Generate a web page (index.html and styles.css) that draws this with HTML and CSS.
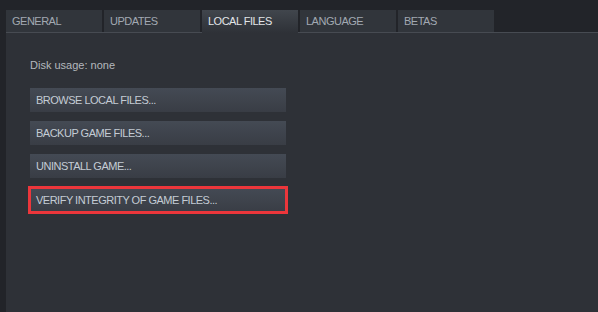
FILE: index.html
```html
<!DOCTYPE html>
<html lang="en">
<head>
    <meta charset="UTF-8">
    <title>Properties - Local Files</title>
    <link rel="stylesheet" href="styles.css">
</head>
<body>
    <div class="window">
        <nav class="tabs">
            <div class="tab">GENERAL</div>
            <div class="tab">UPDATES</div>
            <div class="tab active">LOCAL FILES</div>
            <div class="tab">LANGUAGE</div>
            <div class="tab">BETAS</div>
        </nav>
        <section class="panel">
            <p class="disk">Disk usage: none</p>
            <div class="actions">
                <button class="btn">BROWSE LOCAL FILES...</button>
                <button class="btn">BACKUP GAME FILES...</button>
                <button class="btn">UNINSTALL GAME...</button>
                <button class="btn verify">VERIFY INTEGRITY OF GAME FILES...</button>
            </div>
        </section>
    </div>
</body>
</html>
```

FILE: styles.css
```css
* {
    margin: 0;
    padding: 0;
    box-sizing: border-box;
}
html, body {
    height: 100%;
}
body {
    font-family: 'Liberation Sans', Arial, sans-serif;
    background: #25272c;
    overflow: hidden;
}
.window {
    height: 100%;
    display: flex;
    flex-direction: column;
    background: #222429;
    padding-top: 10px;
}
.tabs {
    display: flex;
    gap: 2px;
    margin-left: 6px;
    height: 23px;
    border-bottom: 1px solid #474b52;
}
.tab {
    width: 96px;
    height: 22px;
    padding: 0 6px;
    background: #31353b;
    color: #a2a9b2;
    font-size: 11px;
    letter-spacing: -0.5px;
    line-height: 22px;
}
.tab.active {
    height: 23px;
    margin-bottom: -1px;
    background: linear-gradient(#41464d, #2e3137);
    color: #e2e5e8;
}
.panel {
    flex: 1;
    margin-left: 6px;
    background: #2e3137;
    padding: 26px 24px;
}
.disk {
    font-size: 11px;
    line-height: 13px;
    color: #b4b8bd;
}
.actions {
    display: flex;
    flex-direction: column;
    gap: 9px;
    margin-top: 16px;
}
.btn {
    width: 256px;
    height: 24px;
    padding: 0 6px;
    border: none;
    text-align: left;
    font-family: inherit;
    font-size: 11px;
    letter-spacing: -0.5px;
    color: #c4ccd5;
    background: linear-gradient(#444a54, #393d45);
}
.verify {
    margin-top: 1px;
    outline: 3px solid #ec363b;
    outline-offset: -1px;
}
```
